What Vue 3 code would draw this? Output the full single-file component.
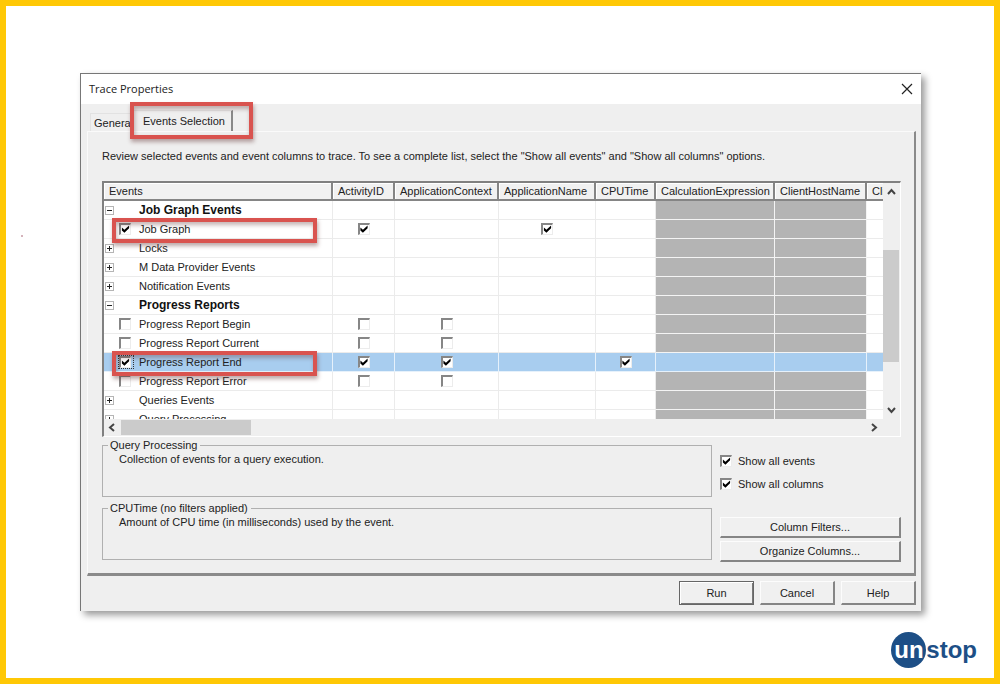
<script setup>
import { ref } from 'vue'

const columns = [
  { name: 'ActivityID', cls: 'c-activity' },
  { name: 'ApplicationContext', cls: 'c-context' },
  { name: 'ApplicationName', cls: 'c-app' },
  { name: 'CPUTime', cls: 'c-cpu' },
  { name: 'CalculationExpression', cls: 'c-calc', off: true },
  { name: 'ClientHostName', cls: 'c-host', off: true },
  { name: 'Cli', cls: 'c-rest' },
]

const rows = ref([
  { label: 'Job Graph Events', group: true, open: true },
  { label: 'Job Graph', on: true, marked: true, cells: { ActivityID: true, ApplicationName: true } },
  { label: 'Locks', group: true },
  { label: 'M Data Provider Events', group: true },
  { label: 'Notification Events', group: true },
  { label: 'Progress Reports', group: true, open: true },
  { label: 'Progress Report Begin', on: false, cells: { ActivityID: false, ApplicationContext: false } },
  { label: 'Progress Report Current', on: false, cells: { ActivityID: false, ApplicationContext: false } },
  { label: 'Progress Report End', on: true, marked: true, selected: true, cells: { ActivityID: true, ApplicationContext: true, CPUTime: true } },
  { label: 'Progress Report Error', on: false, cells: { ActivityID: false, ApplicationContext: false } },
  { label: 'Queries Events', group: true },
  { label: 'Query Processing', group: true },
])

const showEvents = ref(true)
const showColumns = ref(true)
</script>

<template>
  <main class="frame">
    <i class="speck"></i>
    <section class="dialog" aria-labelledby="dialog-title">
      <header class="titlebar">
        <h1 id="dialog-title">Trace Properties</h1>
        <button class="close" type="button" aria-label="Close">
          <svg width="12" height="12" viewBox="0 0 12 12"><path d="M1 1L11 11M11 1L1 11" fill="none" stroke="#222" stroke-width="1.2" /></svg>
        </button>
      </header>

      <div class="body">
        <nav class="tabs" role="tablist">
          <button class="tab" type="button" role="tab" aria-selected="false">General</button>
          <button class="tab active" type="button" role="tab" aria-selected="true">Events Selection<span class="mark tab-mark"></span></button>
        </nav>

        <div class="panel">
          <p class="intro">Review selected events and event columns to trace. To see a complete list, select the "Show all events" and "Show all columns" options.</p>

          <div class="grid-box">
            <div class="viewport">
              <table>
                <colgroup>
                  <col class="c-events">
                  <col v-for="c in columns" :key="c.name" :class="c.cls">
                </colgroup>
                <thead>
                  <tr>
                    <th scope="col">Events</th>
                    <th v-for="c in columns" :key="c.name" scope="col">{{ c.name }}</th>
                  </tr>
                </thead>
                <tbody>
                  <tr v-for="r in rows" :key="r.label" :class="{ selected: r.selected }">
                    <td class="event">
                      <div class="entry">
                        <button v-if="r.group" class="toggle" :class="{ open: r.open }" type="button" :aria-label="'Toggle ' + r.label"></button>
                        <span v-else></span>
                        <span v-if="r.group"></span>
                        <span v-else class="pick" :class="{ focus: r.selected }">
                          <input v-model="r.on" type="checkbox" class="check" :aria-label="r.label">
                        </span>
                        <span :class="{ strong: r.open }">{{ r.label }}</span>
                      </div>
                      <span v-if="r.marked" class="mark row-mark"></span>
                    </td>
                    <td v-for="c in columns" :key="c.name" :class="{ off: c.off }">
                      <div v-if="r.cells && c.name in r.cells" class="centre">
                        <input v-model="r.cells[c.name]" type="checkbox" class="check" :aria-label="r.label + ' ' + c.name">
                      </div>
                    </td>
                  </tr>
                </tbody>
              </table>
            </div>
            <div class="vbar">
              <svg width="9" height="7" viewBox="0 0 9 7"><path d="M1 6L4.500 2L8 6" fill="none" stroke="#444" stroke-width="2" /></svg>
              <div class="vtrack"><div class="vthumb"></div></div>
              <svg width="9" height="7" viewBox="0 0 9 7"><path d="M1 1L4.500 5L8 1" fill="none" stroke="#444" stroke-width="2" /></svg>
            </div>
            <div class="hbar">
              <svg width="7" height="9" viewBox="0 0 7 9"><path d="M6 1L2 4.500L6 8" fill="none" stroke="#444" stroke-width="2" /></svg>
              <div class="htrack"><div class="hthumb"></div></div>
              <svg width="7" height="9" viewBox="0 0 7 9"><path d="M1 1L5 4.500L1 8" fill="none" stroke="#444" stroke-width="2" /></svg>
            </div>
          </div>

          <div class="lower">
            <div class="notes">
              <fieldset>
                <legend>Query Processing</legend>
                <p>Collection of events for a query execution.</p>
              </fieldset>
              <fieldset>
                <legend>CPUTime (no filters applied)</legend>
                <p>Amount of CPU time (in milliseconds) used by the event.</p>
              </fieldset>
            </div>
            <div class="options">
              <label><input v-model="showEvents" type="checkbox" class="check">Show all events</label>
              <label><input v-model="showColumns" type="checkbox" class="check">Show all columns</label>
              <div class="stack">
                <button class="btn slim" type="button">Column Filters...</button>
                <button class="btn slim" type="button">Organize Columns...</button>
              </div>
            </div>
          </div>
        </div>

        <footer class="actions">
          <button class="btn main" type="button">Run</button>
          <button class="btn" type="button">Cancel</button>
          <button class="btn" type="button">Help</button>
        </footer>
      </div>
    </section>

    <div class="brand"><span class="disc">un</span><span>stop</span></div>
  </main>
</template>

<style>
body {
  background: #fff;
}
</style>

<style scoped>
* {
  box-sizing: border-box;
}
.frame {
  position: relative;
  min-height: 100vh;
  padding: 67px 73px 10px 74px;
  border: 6px solid #ffc805;
  background: #fff;
  font: 11px/14px "Liberation Sans", Arial, sans-serif;
  color: #222;
}
.speck {
  position: absolute;
  left: 15px;
  top: 229px;
  width: 2px;
  height: 2px;
  background: #d5b3bb;
}
button {
  font: inherit;
  color: inherit;
  margin: 0;
  padding: 0;
  border: 0;
  border-radius: 0;
  background: none;
}
p,
h1 {
  margin: 0;
}
.dialog {
  border-top: 1px solid #777;
  border-left: 1px solid #777;
  background: #efefef;
  box-shadow: 4px 4px 7px rgba(0, 0, 0, 0.4);
}
.titlebar {
  display: flex;
  align-items: center;
  justify-content: space-between;
  height: 30px;
  padding: 0 8px;
  background: #fff;
}
h1 {
  font: 11px/16px "Open Sans", "Noto Sans", sans-serif;
}
.close {
  display: flex;
}
.body {
  padding: 6px 5px 6px 6px;
}
.tabs {
  display: flex;
  align-items: flex-end;
  height: 21px;
  padding-left: 3px;
}
.tab {
  width: 42px;
  height: 18px;
  padding-left: 3px;
  border-top: 1px solid #e2e2e2;
  border-left: 1px solid #e2e2e2;
  text-align: left;
  white-space: nowrap;
  overflow: hidden;
}
.tab.active {
  position: relative;
  width: 101px;
  height: 21px;
  padding: 0 0 1px 10px;
  border-right: 2px solid #888;
  background: #efefef;
  overflow: visible;
}
.mark {
  position: absolute;
  z-index: 2;
  border: 4px solid #d9534f;
  box-shadow: 1px 3px 4px rgba(90, 40, 40, 0.4), inset 1px 3px 4px rgba(90, 40, 40, 0.35);
  pointer-events: none;
}
.tab-mark {
  left: -3px;
  top: -9px;
  width: 123px;
  height: 37px;
}
.row-mark {
  left: 8px;
  top: -2px;
  width: 205px;
  height: 25px;
}
.panel {
  padding: 17px 13px 11px 14px;
  border: 1px solid #fafafa;
  border-right: 2px solid #8a8a8a;
  border-bottom: 3px solid #8a8a8a;
}
.intro {
  white-space: nowrap;
}
.grid-box {
  display: grid;
  grid-template-columns: minmax(0, 1fr) 17px;
  grid-template-rows: 236px 17px;
  margin-top: 18px;
  border: 2px solid #808080;
  border-right: 1px solid #fff;
  border-bottom: 1px solid #fff;
}
.viewport {
  overflow: hidden;
  background: #fff;
}
table {
  width: 100%;
  table-layout: fixed;
  border-collapse: separate;
  border-spacing: 0;
}
.c-events { width: 229px; }
.c-activity { width: 62px; }
.c-context { width: 104px; }
.c-app { width: 97px; }
.c-cpu { width: 60px; }
.c-calc { width: 119px; }
.c-host { width: 92px; }
th {
  height: 18px;
  padding: 0 0 0 5px;
  border-right: 2px solid #858585;
  border-bottom: 2px solid #858585;
  box-shadow: inset 1px 1px #fff;
  background: #f1f1f1;
  font-weight: normal;
  line-height: 15px;
  text-align: left;
  white-space: nowrap;
  overflow: hidden;
}
th:last-child {
  border-right: 0;
}
td {
  height: 19px;
  padding: 0;
  border-right: 1px solid #ebebeb;
  border-bottom: 1px solid #ebebeb;
  white-space: nowrap;
}
td:last-child {
  border-right: 0;
}
td.off {
  background: #b4b4b4;
  border-color: #f4f4f4;
}
.selected td {
  background: #a8cdef;
  border-color: #e6f1fb;
}
.event {
  position: relative;
}
.entry {
  display: grid;
  grid-template-columns: 14px 20px 1fr;
  align-items: center;
  height: 18px;
  padding-left: 1px;
}
.centre {
  display: flex;
  justify-content: center;
  align-items: center;
  height: 18px;
}
.strong {
  font-size: 12px;
  font-weight: bold;
  color: #111;
}
.pick {
  display: flex;
  width: 14px;
}
.focus {
  outline: 1px dotted #333;
}
.toggle {
  width: 9px;
  height: 9px;
  border: 1px solid #b5b5b5;
  background:
    linear-gradient(#222, #222) center / 5px 1px no-repeat,
    linear-gradient(#222, #222) center / 1px 5px no-repeat,
    #fff;
}
.toggle.open {
  background: linear-gradient(#222, #222) center / 5px 1px no-repeat, #fff;
}
.check {
  appearance: none;
  flex: none;
  width: 12px;
  height: 12px;
  margin: 0;
  border: 1px solid #ececec;
  border-top: 2px solid #868686;
  border-left: 2px solid #868686;
  background: #fff;
}
.check:checked::before {
  content: "";
  display: block;
  width: 9px;
  height: 8px;
  background: #000;
  clip-path: polygon(10% 32%, 38% 60%, 90% 6%, 90% 42%, 38% 98%, 10% 68%);
}
.vbar {
  display: flex;
  flex-direction: column;
  align-items: center;
  padding: 5px 1px 5px 0;
}
.vtrack {
  flex: 1;
  width: 100%;
  padding-top: 55px;
}
.vthumb {
  height: 112px;
  background: #cbcbcb;
}
.hbar {
  display: flex;
  align-items: center;
  padding: 0 5px 0 4px;
}
.htrack {
  flex: 1;
  padding-left: 6px;
}
.hthumb {
  width: 130px;
  height: 15px;
  background: #cbcbcb;
}
.lower {
  display: grid;
  grid-template-columns: minmax(0, 1fr) 181px;
  gap: 8px;
  padding-top: 1px;
}
.notes {
  display: flex;
  flex-direction: column;
  gap: 4px;
}
fieldset {
  height: 59px;
  min-width: 0;
  margin: 0;
  padding: 0 16px;
  border: 1px solid #b0b0b0;
}
legend {
  margin-left: -11px;
  padding: 0 3px 0 2px;
}
.options {
  display: flex;
  flex-direction: column;
  gap: 9px;
  padding-top: 16px;
}
.options label {
  display: flex;
  align-items: center;
  gap: 6px;
}
.stack {
  display: flex;
  flex-direction: column;
  gap: 3px;
  margin-top: 17px;
}
.btn {
  width: 75px;
  height: 24px;
  border: 1px solid #fcfcfc;
  border-right: 2px solid #858585;
  border-bottom: 2px solid #858585;
  background: #f0f0f0;
}
.btn.slim {
  width: 100%;
  height: 21px;
}
.btn.main {
  border: 1px solid #666;
  box-shadow: inset 1px 1px #fff, inset -1px -1px #777;
}
.actions {
  display: flex;
  justify-content: flex-end;
  gap: 6px;
  padding-top: 5px;
}
.brand {
  position: absolute;
  right: 17px;
  bottom: 10px;
  display: flex;
  align-items: center;
  color: #1d4f86;
  font: bold 24px/36px "Liberation Sans", Arial, sans-serif;
}
.disc {
  width: 35px;
  height: 36px;
  padding-left: 3px;
  border-radius: 50%;
  background: #1d4f86;
  color: #fff;
}
</style>
